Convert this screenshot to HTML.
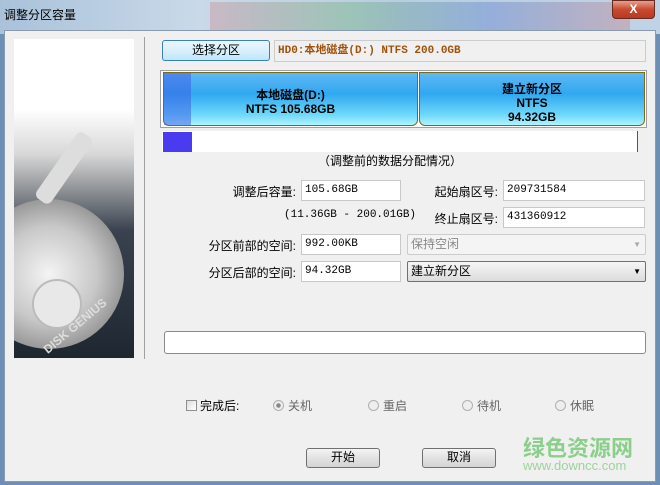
<!DOCTYPE html>
<html><head><meta charset="utf-8"><style>
*{margin:0;padding:0;box-sizing:border-box}
body{width:660px;height:485px;overflow:hidden;position:relative;font-family:"Liberation Sans","Noto Sans CJK SC",sans-serif;font-size:12px;color:#000;background:#6e8fb5}
.a{position:absolute}
.title{left:0;top:0;width:660px;height:34px;background:linear-gradient(90deg,#a9c2da,#c9d9e8 30%,#b9cde0 60%,#c0d3e6);}
.client{left:4px;top:30px;width:652px;height:452px;background:#f0f0f0;border:1px solid #8a9bb0}
.inp{background:#fff;border:1px solid #c8c8c8;font-family:"Liberation Mono","Noto Sans CJK SC",monospace;font-size:11px;padding:2px 3px;height:21px;line-height:15px}
.lbl{text-align:right;font-size:12px}
.btn{border:1px solid #707070;border-radius:3px;background:linear-gradient(#f4f4f4,#e2e2e2 50%,#d4d4d4);text-align:center;line-height:17px;font-size:12px}
.rad{width:11px;height:11px;border-radius:50%;border:1px solid #b0b0b0;background:#eee}
</style></head><body>
<div class="a title"></div>
<div class="a" style="left:210px;top:2px;width:420px;height:28px;background:linear-gradient(90deg,rgba(200,60,60,.2),rgba(60,160,60,.25),rgba(60,100,200,.3),rgba(200,80,80,.25));"></div>
<div class="a" style="left:4px;top:6px;font-size:12px">调整分区容量</div>
<div class="a" style="left:612px;top:0;width:43px;height:19px;border-radius:0 0 4px 4px;background:linear-gradient(#e8a090,#c84a30 50%,#b83a20);border:1px solid #6b2a20;color:#fff;font-weight:bold;text-align:center;line-height:17px;font-size:12px">X</div>
<div class="a client"></div>
<div class="a" style="left:14px;top:39px;width:120px;height:319px;overflow:hidden;background:linear-gradient(#fff 0,#fff 22%,#d8d8d8 36%,#8a8e92 48%,#3a4250 60%,#1e2630 100%)">
 <div class="a" style="left:-40px;top:160px;width:150px;height:150px;border-radius:50%;background:radial-gradient(circle at 50% 50%,#f4f4f4,#c8c8c8 45%,#9a9a9a 70%,#555 100%)"></div>
 <div class="a" style="left:18px;top:240px;width:50px;height:50px;border-radius:50%;background:#e8e8e8;border:2px solid #bbb"></div>
 <div class="a" style="left:10px;top:120px;width:80px;height:18px;background:#ddd;transform:rotate(-55deg);border-radius:6px"></div>
 <div class="a" style="left:22px;top:280px;color:#ddd;font-weight:bold;font-size:12px;transform:rotate(-40deg)">DISK GENIUS</div>
</div>
<div class="a" style="left:144px;top:37px;width:1px;height:322px;background:#a0a0a0"></div>
<div class="a btn" style="left:162px;top:40px;width:108px;height:21px;border-color:#3c7fb1;line-height:19px;background:linear-gradient(#eaf6fd,#d9f0fc 50%,#bee6fd)">选择分区</div>
<div class="a" style="left:274px;top:40px;width:372px;height:22px;border:1px solid #ccc;color:#a0520a;font-weight:bold;font-family:'Liberation Mono','Noto Sans CJK SC',monospace;font-size:11px;line-height:20px;padding-left:3px">HD0:本地磁盘(D:) NTFS 200.0GB</div>
<div class="a" style="left:160px;top:70px;width:487px;height:58px;border:1px solid #a0a0a0;background:#fff"></div>
<div class="a" style="left:163px;top:72px;width:255px;height:54px;border:1px solid #7a6a20;border-radius:0 0 6px 6px;background:linear-gradient(#5fb8f5,#30a8f0 40%,#6ed8fa 80%,#b0f4ff);text-align:center;font-weight:bold;font-size:12px;padding-top:15px;line-height:14px"><div class="a" style="left:0;top:0;width:27px;height:52px;background:rgba(60,90,230,.5)"></div><span style="position:relative">本地磁盘(D:)<br>NTFS 105.68GB</span></div>
<div class="a" style="left:419px;top:72px;width:226px;height:54px;border:1px solid #7a6a20;border-radius:0 0 6px 6px;background:linear-gradient(#5fb8f5,#30a8f0 40%,#6ed8fa 80%,#b0f4ff);text-align:center;font-weight:bold;font-size:12px;padding-top:9px;line-height:14px">建立新分区<br>NTFS<br>94.32GB</div>
<div class="a" style="left:162px;top:131px;width:476px;height:21px;background:#fff;border-right:1px solid #8030a0"></div>
<div class="a" style="left:163px;top:132px;width:29px;height:20px;background:#4a3af0"></div>
<div class="a" style="left:318px;top:152px;font-size:12px">（调整前的数据分配情况）</div>
<div class="a lbl" style="left:200px;top:183px;width:96px">调整后容量:</div>
<div class="a inp" style="left:301px;top:180px;width:100px">105.68GB</div>
<div class="a lbl" style="left:400px;top:183px;width:98px">起始扇区号:</div>
<div class="a inp" style="left:503px;top:180px;width:142px">209731584</div>
<div class="a" style="left:284px;top:209px;font-family:'Liberation Mono',monospace;font-size:11px">(11.36GB - 200.01GB)</div>
<div class="a lbl" style="left:400px;top:210px;width:98px">终止扇区号:</div>
<div class="a inp" style="left:503px;top:207px;width:142px">431360912</div>
<div class="a lbl" style="left:180px;top:237px;width:116px">分区前部的空间:</div>
<div class="a inp" style="left:301px;top:234px;width:100px">992.00KB</div>
<div class="a" style="left:407px;top:234px;width:239px;height:21px;border:1px solid #ccc;border-radius:2px;background:#f4f4f4;color:#888;padding:2px 3px;line-height:15px">保持空闲<span style="position:absolute;right:4px;top:2px;font-size:8px;color:#aaa">▼</span></div>
<div class="a lbl" style="left:180px;top:264px;width:116px">分区后部的空间:</div>
<div class="a inp" style="left:301px;top:261px;width:100px">94.32GB</div>
<div class="a" style="left:407px;top:261px;width:239px;height:21px;border:1px solid #707070;border-radius:2px;background:linear-gradient(#f6f6f6,#dcdcdc);padding:2px 3px;line-height:15px">建立新分区<span style="position:absolute;right:4px;top:2px;font-size:8px">▼</span></div>
<div class="a" style="left:164px;top:331px;width:482px;height:23px;border:1px solid #8a8a8a;border-radius:3px;background:#fff"></div>
<div class="a" style="left:186px;top:400px;width:11px;height:11px;border:1px solid #8e8f8f;background:linear-gradient(135deg,#ddd,#fff)"></div>
<div class="a" style="left:200px;top:397px">完成后:</div>
<div class="a rad" style="left:273px;top:400px;background:radial-gradient(#888 30%,#eee 40%)"></div><div class="a" style="left:288px;top:397px;color:#666">关机</div>
<div class="a rad" style="left:368px;top:400px"></div><div class="a" style="left:383px;top:397px;color:#666">重启</div>
<div class="a rad" style="left:462px;top:400px"></div><div class="a" style="left:477px;top:397px;color:#666">待机</div>
<div class="a rad" style="left:555px;top:400px"></div><div class="a" style="left:570px;top:397px;color:#666">休眠</div>
<div class="a btn" style="left:306px;top:448px;width:74px;height:20px">开始</div>
<div class="a btn" style="left:422px;top:448px;width:74px;height:20px">取消</div>
<div class="a" style="left:523px;top:431px;color:#8ccf8c;font-weight:bold;font-size:22px">绿色资源网</div>
<div class="a" style="left:523px;top:458px;color:#9ad49a;font-size:13px">www.downcc.com</div>
</body></html>
